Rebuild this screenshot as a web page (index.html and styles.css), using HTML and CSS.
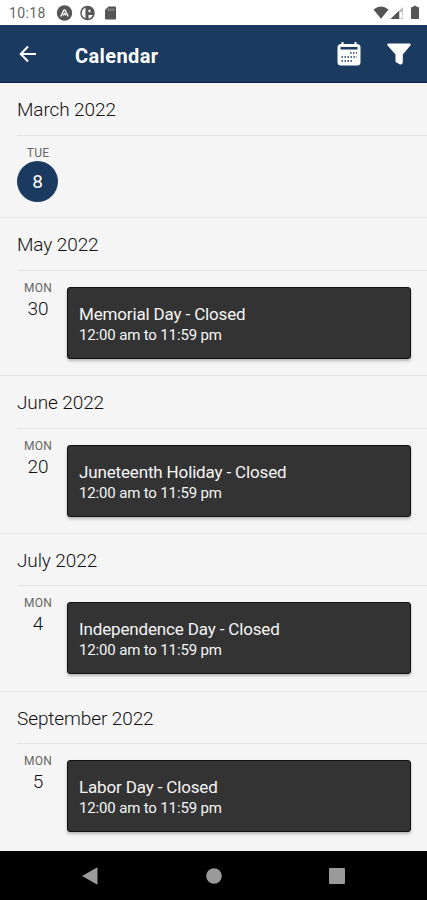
FILE: index.html
```html
<!DOCTYPE html>
<html lang="en">

<head>
    <meta charset="UTF-8">
    <meta name="viewport" content="width=device-width, initial-scale=1.0">
    <title>Calendar</title>
    <link rel="stylesheet" href="styles.css">
</head>

<body>
    <!-- Status Bar -->
    <div class="status-bar">
        <span class="clock">10:18</span>
        <svg class="status-left" width="62" height="16" viewBox="0 0 62 16">
            <circle cx="8.5" cy="8" r="7.7" fill="#555" />
            <path d="M4.8 11.5 7.7 5.4Q8.5 4.3 9.3 5.4L12.2 11.5M7 10.5 8.5 8.3 10 10.5" fill="none" stroke="#fff" stroke-width="1.3" />
            <circle cx="31.5" cy="8" r="6.5" fill="none" stroke="#555" stroke-width="1.5" />
            <path d="M29.5 2V14H32.5V10H37.5V4.5L33.5 2ZM32.5 4.8H34.5V7.2H32.5Z" fill="#555" fill-rule="evenodd" />
            <path d="M52.5 1.5H59Q60 1.5 60 2.5V13.5Q60 14.5 59 14.5H50Q49 14.5 49 13.5V5Z" fill="#555" />
            <path d="M52.5 3.5V6M54.8 3.5V6M57.1 3.5V6" stroke="#aaa" stroke-width="1" />
        </svg>
        <svg class="status-right" width="48" height="16" viewBox="0 0 48 16">
            <path d="M0.5 4.5Q8 -1.5 15.5 4.5L8 13.8Z" fill="#555" />
            <path d="M17.5 14 30 2V14Z" fill="#bbb" />
            <path d="M17.5 14 26 5.8V14Z" fill="#555" />
            <path d="M26.7 7H29.3V13.3H26.7Z" fill="#fff" />
            <path d="M38.7 2H40.5V0.8H43.5V2H45.3Q46 2 46 2.8V13.2Q46 14 45.2 14H38.8Q38 14 38 13.2V2.8Q38 2 38.7 2Z" fill="#555" />
        </svg>
    </div>

    <!-- App Header -->
    <div class="header">
        <svg class="back-icon" width="18" height="18" viewBox="0 0 18 18">
            <path d="M17 9H2M9 1.5 1.7 9 9 16.5" fill="none" stroke="#fff" stroke-width="2" />
        </svg>
        <h1>Calendar</h1>
        <svg class="calendar-icon" width="24" height="24" viewBox="0 0 24 24">
            <rect x="0.5" y="2" width="23" height="21.5" rx="3.5" fill="#fff" />
            <path d="M5.5 0V4M18.5 0V4" stroke="#fff" stroke-width="2" />
            <path d="M3.5 5H20.5V7.5H3.5Z" fill="#1a3a60" />
            <path d="M13 11H20M4.5 15H20M4.5 19H16" stroke="#1a3a60" stroke-width="1.5" stroke-dasharray="1.5 1.5" />
        </svg>
        <svg class="filter-icon" width="26" height="24" viewBox="0 0 26 24">
            <path d="M2.5 1.5H23.5Q25.5 1.8 24.2 3.8L16.8 12.5V20.5Q16.3 23 14 22.5L10.5 20.5Q9.5 20 9.5 19V12.5L1.8 3.8Q0.5 1.8 2.5 1.5Z" fill="#fff" />
        </svg>
    </div>

    <!-- Event List -->
    <div class="event-list">
        <div class="month today">
            <h2>March 2022</h2>
            <div class="day-row">
                <div class="date">
                    <span class="weekday">TUE</span>
                    <span class="day-number selected">8</span>
                </div>
            </div>
        </div>
        <div class="month">
            <h2>May 2022</h2>
            <div class="day-row">
                <div class="date">
                    <span class="weekday">MON</span>
                    <span class="day-number">30</span>
                </div>
                <div class="event-card">
                    <div class="event-title">Memorial Day - Closed</div>
                    <div class="event-time">12:00 am to 11:59 pm</div>
                </div>
            </div>
        </div>
        <div class="month">
            <h2>June 2022</h2>
            <div class="day-row">
                <div class="date">
                    <span class="weekday">MON</span>
                    <span class="day-number">20</span>
                </div>
                <div class="event-card">
                    <div class="event-title">Juneteenth Holiday - Closed</div>
                    <div class="event-time">12:00 am to 11:59 pm</div>
                </div>
            </div>
        </div>
        <div class="month">
            <h2>July 2022</h2>
            <div class="day-row">
                <div class="date">
                    <span class="weekday">MON</span>
                    <span class="day-number">4</span>
                </div>
                <div class="event-card">
                    <div class="event-title">Independence Day - Closed</div>
                    <div class="event-time">12:00 am to 11:59 pm</div>
                </div>
            </div>
        </div>
        <div class="month">
            <h2>September 2022</h2>
            <div class="day-row">
                <div class="date">
                    <span class="weekday">MON</span>
                    <span class="day-number">5</span>
                </div>
                <div class="event-card">
                    <div class="event-title">Labor Day - Closed</div>
                    <div class="event-time">12:00 am to 11:59 pm</div>
                </div>
            </div>
        </div>
    </div>

    <!-- Navigation Bar -->
    <div class="nav-bar">
        <svg width="16" height="18" viewBox="0 0 16 18">
            <path d="M0 9 15.5 0.3V17.7Z" fill="#9a9a9a" />
        </svg>
        <svg width="16" height="16" viewBox="0 0 16 16">
            <circle cx="8" cy="8" r="7.8" fill="#9a9a9a" />
        </svg>
        <svg width="16" height="16" viewBox="0 0 16 16">
            <rect width="16" height="16" rx="1" fill="#9a9a9a" />
        </svg>
    </div>
</body>

</html>
```

FILE: styles.css
```css
* {
    box-sizing: border-box;
}

body {
    font-family: Roboto, "Liberation Sans", sans-serif;
    display: flex;
    flex-direction: column;
    height: 100vh;
    margin: 0;
    background-color: #f5f5f5;
    color: #333;
    overflow: hidden;
}

.status-bar {
    display: flex;
    align-items: center;
    flex: none;
    height: 25px;
    padding: 1px 6px 0 9px;
    background-color: #fff;
}

.clock {
    width: 47px;
    font-size: 14px;
    letter-spacing: 0.4px;
    color: #666;
}

.status-right {
    margin-left: auto;
}

.header {
    display: flex;
    align-items: center;
    flex: none;
    height: 58px;
    padding: 1px 15px 0 19px;
    background-color: #1a3a60;
    border-bottom: 1px solid #0d1f50;
    color: #fff;
}

.header h1 {
    flex: 1;
    margin: 3px 0 0 38px;
    font-size: 20px;
    font-weight: 700;
    letter-spacing: 0.4px;
}

.filter-icon {
    margin-left: 25px;
}

.event-list {
    flex: 1;
    min-height: 0;
    overflow: hidden;
}

.month {
    height: 157.8px;
    border-bottom: 1px solid #e4e4e4;
}

.month.today {
    height: 135.4px;
}

.month:last-child {
    border-bottom: none;
}

.month h2 {
    height: 52.5px;
    margin: 0 0 0 17px;
    border-bottom: 1px solid #e2e2e2;
    font-size: 19px;
    font-weight: 300;
    line-height: 53px;
    letter-spacing: -0.1px;
    color: #111;
}

.day-row {
    display: flex;
    padding: 9px 16px 0 17px;
}

.date {
    display: flex;
    flex-direction: column;
    align-items: center;
    width: 42px;
    margin-right: 8px;
}

.weekday {
    font-size: 12px;
    line-height: 16px;
    letter-spacing: 0.2px;
    color: #666;
}

.day-number {
    font-size: 19px;
    font-weight: 300;
    line-height: 26px;
    color: #111;
}

.day-number.selected {
    width: 41px;
    height: 41px;
    margin-right: 1px;
    border-radius: 50%;
    background-color: #1a3a60;
    color: #fff;
    font-weight: 400;
    line-height: 42px;
    text-align: center;
}

.event-card {
    flex: 1;
    height: 72px;
    margin-top: 7px;
    padding: 15px 11px;
    border: 1.5px solid #111;
    border-radius: 3px;
    background-color: #333;
    box-shadow: 0 2px 3px rgba(0, 0, 0, 0.25);
    color: #f5f5f5;
}

.event-title {
    font-size: 17px;
    line-height: 22px;
    letter-spacing: -0.15px;
}

.event-time {
    font-size: 15px;
    line-height: 21px;
    letter-spacing: -0.15px;
}

.nav-bar {
    display: flex;
    align-items: center;
    justify-content: space-between;
    flex: none;
    height: 49px;
    padding: 0 82px;
    background-color: #000;
}
```
